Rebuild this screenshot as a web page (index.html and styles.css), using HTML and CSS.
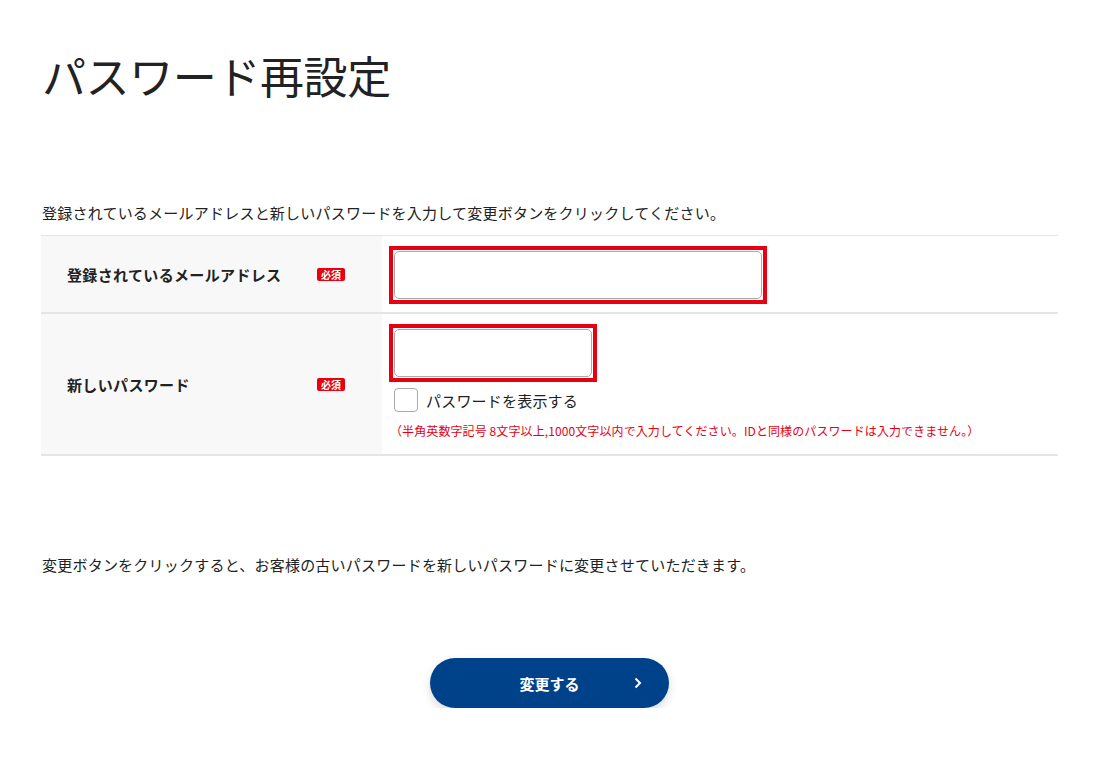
FILE: index.html
```html
<!DOCTYPE html>
<html lang="ja">
<head>
    <meta charset="UTF-8">
    <meta name="viewport" content="width=device-width, initial-scale=1.0">
    <title>パスワード再設定</title>
    <link rel="stylesheet" href="styles.css">
</head>
<body>

    <div class="page">
        <h1 class="page-title">パスワード再設定</h1>

        <p class="lead">登録されているメールアドレスと新しいパスワードを入力して変更ボタンをクリックしてください。</p>

        <div class="form-table">
            <div class="form-row">
                <div class="form-head">
                    <span class="form-label">登録されているメールアドレス</span>
                    <span class="badge">必須</span>
                </div>
                <div class="form-body">
                    <div class="field-error field-wide">
                        <input type="email" class="text-input">
                    </div>
                </div>
            </div>

            <div class="form-row">
                <div class="form-head">
                    <span class="form-label">新しいパスワード</span>
                    <span class="badge">必須</span>
                </div>
                <div class="form-body">
                    <div class="field-error field-narrow">
                        <input type="password" class="text-input">
                    </div>
                    <label class="show-pass">
                        <span class="check-box"></span>
                        パスワードを表示する
                    </label>
                    <p class="note">（半角英数字記号 8文字以上,1000文字以内で入力してください。IDと同様のパスワードは入力できません。）</p>
                </div>
            </div>
        </div>

        <p class="notice">変更ボタンをクリックすると、お客様の古いパスワードを新しいパスワードに変更させていただきます。</p>

        <div class="actions">
            <button class="submit-btn">
                変更する
                <svg class="chevron" width="8" height="12" viewBox="0 0 8 12">
                    <path d="M1.5 1.5 L6 6 L1.5 10.5" fill="none" stroke="#fff" stroke-width="2"/>
                </svg>
            </button>
        </div>
    </div>

</body>
</html>
```

FILE: styles.css
```css
/* base */
body {
    margin: 0;
    font-family: "Noto Sans CJK JP", "Noto Sans", sans-serif;
    color: #222;
    background: #fff;
}

.page {
    padding: 0 42px 0 41px;
}

.page-title {
    margin: 43px 0 0 1px;
    font-size: 44px;
    line-height: 64px;
    font-weight: 400;
    letter-spacing: -0.4px;
}

.lead {
    margin: 94px 0 0 1px;
    font-size: 15px;
    line-height: 24px;
    letter-spacing: 0.22px;
}

/* form table */
.form-table {
    margin-top: 10px;
    border-top: 1px solid #e5e5e5;
}

.form-row {
    display: flex;
    border-bottom: 2px solid #e5e5e5;
}

.form-head {
    width: 341px;
    flex-shrink: 0;
    display: flex;
    align-items: center;
    padding: 0 37px 0 26px;
    box-sizing: border-box;
    background: #f8f8f8;
}

.form-label {
    flex: 1;
    font-size: 15px;
    font-weight: 700;
    letter-spacing: 0.35px;
}

.badge {
    background: #e60012;
    color: #fff;
    font-size: 10px;
    font-weight: 700;
    line-height: 13px;
    padding: 0 4px;
    border-radius: 2px;
}

.form-body {
    padding: 10px 7px 14px;
}

.form-row:first-child .form-body {
    padding-bottom: 8px;
}

.field-error {
    border: 4px solid #e60012;
    padding: 1px;
    background: #fff;
}

.field-wide {
    width: 368px;
}

.field-narrow {
    width: 198px;
}

.text-input {
    display: block;
    width: 100%;
    height: 48px;
    box-sizing: border-box;
    border: 1px solid #aaa;
    border-radius: 5px;
    background: #fff;
    font: inherit;
}

.show-pass {
    display: flex;
    align-items: center;
    gap: 8px;
    margin: 6px 0 0 5px;
    font-size: 15px;
    letter-spacing: 0.2px;
}

.check-box {
    width: 22px;
    height: 22px;
    border: 1px solid #aaa;
    border-radius: 4px;
    background: #fff;
}

.note {
    margin: 10px 0 0 1px;
    font-size: 12px;
    line-height: 18px;
    color: #e60012;
    letter-spacing: 0.1px;
}

.notice {
    margin: 97px 0 0 1px;
    font-size: 15px;
    line-height: 24px;
    letter-spacing: 0.22px;
}

/* button */
.actions {
    display: flex;
    justify-content: center;
    margin-top: 81px;
}

.submit-btn {
    position: relative;
    width: 239px;
    height: 50px;
    border: none;
    border-radius: 25px;
    background: #00428a;
    color: #fff;
    font: inherit;
    font-size: 15px;
    font-weight: 700;
    box-shadow: 0 4px 10px rgba(0, 0, 0, 0.15);
}

.chevron {
    position: absolute;
    right: 27px;
    top: 19px;
}
```
